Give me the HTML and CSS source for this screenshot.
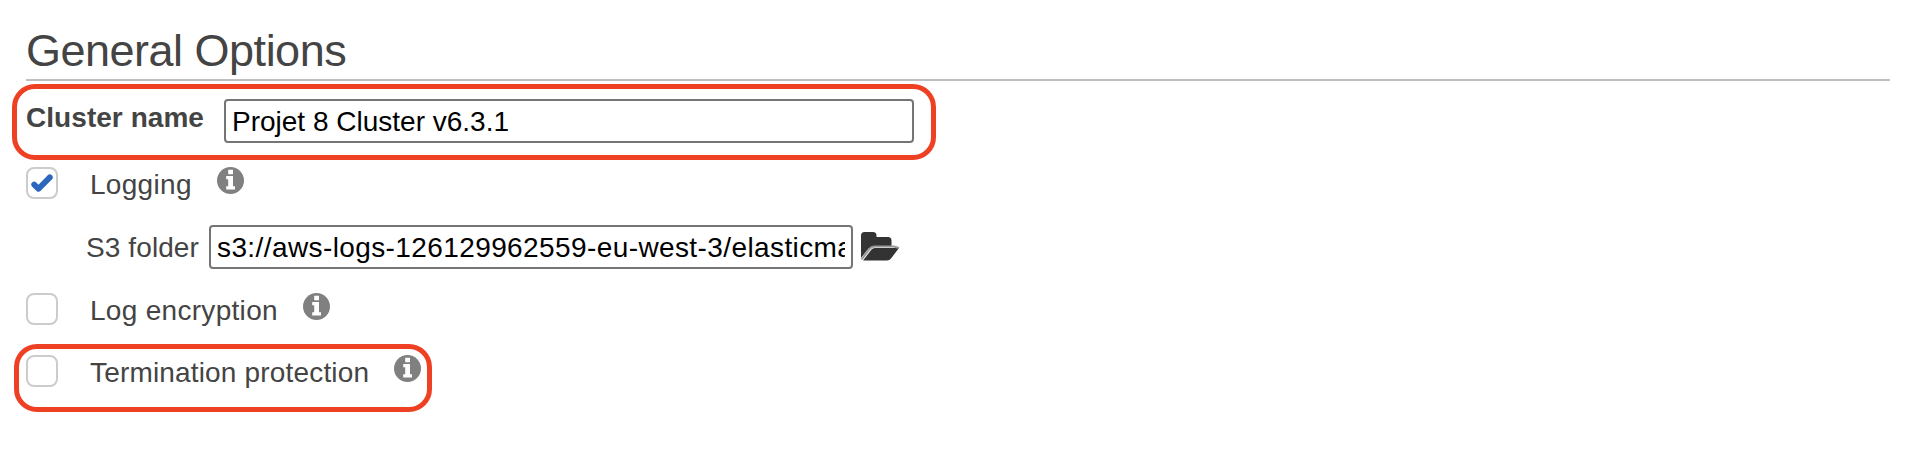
FILE: index.html
```html
<!DOCTYPE html>
<html lang="en">
<head>
<meta charset="utf-8">
<title>General Options</title>
<link rel="stylesheet" href="styles.css">
</head>
<body>
<svg width="0" height="0" class="defs" aria-hidden="true">
  <symbol id="info" viewBox="0 0 27 27">
    <circle cx="13.5" cy="13.5" r="13.5" fill="#808080"/>
    <path fill="#fff" d="M11.200 2.800h4.800v4.400h-4.800zM9.200 9H16v10.200h2v3.300H9.200v-3.300h2v-7h-2z"/>
  </symbol>
</svg>
<main class="panel">
  <h1 class="title">General Options</h1>
  <div class="row row-name">
    <label class="label label-name" for="name">Cluster name</label>
    <input class="field field-name" id="name" type="text" value="Projet 8 Cluster v6.3.1">
  </div>
  <div class="row row-logging">
    <span class="check"><svg class="tick" viewBox="0 0 22 19"><path d="M3.200 10.600 7.600 14.800 18.800 3.400" fill="none" stroke="#2c66bd" stroke-width="5.800" stroke-linecap="round" stroke-linejoin="round"/></svg></span>
    <span class="label option">Logging</span>
    <svg class="info"><use href="#info"/></svg>
  </div>
  <div class="row row-folder">
    <label class="label label-folder" for="folder">S3 folder</label>
    <input class="field field-folder" id="folder" type="text" value="s3://aws-logs-126129962559-eu-west-3/elasticmapreduce/">
    <svg class="folder" viewBox="0 0 40 30"><path fill="#333" d="M1 27V4.500Q1 1 4.500 1H13Q16.500 1 16.500 4.500V6H28Q31.500 6 31.500 9.500V15H15Q11 15 8.500 17.500Z"/><path fill="#333" d="M3 29.500 11.500 18.500Q12.500 17 15 17H39L31 27.500Q29.500 29.500 27 29.500Z"/><path fill="none" stroke="#999" stroke-width="2" d="M1.500 28.500 10 17.500Q11.500 15.500 14.500 15.500H34L39 17"/></svg>
  </div>
  <div class="row row-encryption">
    <span class="check"></span>
    <span class="label option">Log encryption</span>
    <svg class="info"><use href="#info"/></svg>
  </div>
  <div class="row row-termination">
    <span class="check"></span>
    <span class="label option option-termination">Termination protection</span>
    <svg class="info"><use href="#info"/></svg>
  </div>
  <div class="mark mark-name"></div>
  <div class="mark mark-termination"></div>
</main>
</body>
</html>
```
FILE: styles.css
```css
* { box-sizing: border-box; }
body {
  margin: 0;
  background: #fff;
  color: #444;
  font: 28px/32px "Liberation Sans", Arial, sans-serif;
}
.defs { position: absolute; }
.panel { position: relative; height: 466px; padding: 25px 42px 0 26px; }
.title {
  height: 56px;
  margin: 0 0 18px;
  border-bottom: 2px solid #bfbfbf;
  font-size: 45px;
  font-weight: 400;
  line-height: 52px;
  letter-spacing: -0.5px;
}
.row { display: flex; align-items: flex-start; }
.row-name { height: 68px; }
.row-logging { height: 58px; }
.row-folder { height: 68px; padding-left: 60px; }
.row-encryption { height: 62px; }
.label { flex: none; white-space: nowrap; }
.label-name { width: 198px; margin-top: 3px; font-weight: 700; letter-spacing: 0.05px; }
.label-folder { width: 123px; margin-top: 7px; letter-spacing: 0.1px; }
.option { margin: 2px 25px 0 32px; letter-spacing: 0.3px; }
.option-termination { letter-spacing: 0.17px; }
.field {
  height: 44px;
  padding: 1px 6px 0;
  border: 2px solid #757575;
  border-radius: 4px;
  background: #fff;
  color: #000;
  font: inherit;
}
.field-name { width: 690px; }
.field-folder { width: 644px; letter-spacing: 0.4px; }
.check {
  display: grid;
  place-items: center;
  flex: none;
  width: 32px;
  height: 32px;
  border: 2px solid #ccc;
  border-radius: 8px;
}
.tick { width: 22px; height: 19px; }
.info { flex: none; width: 27px; height: 27px; margin-top: 0.4px; }
.folder { flex: none; width: 40px; height: 30px; margin: 5.500px 0 0 6.500px; }
.mark { position: absolute; border: 5px solid #ee4023; border-radius: 23px; pointer-events: none; }
.mark-name { left: 12px; top: 84px; width: 924px; height: 76px; }
.mark-termination { left: 14px; top: 344px; width: 418px; height: 68px; }
```
